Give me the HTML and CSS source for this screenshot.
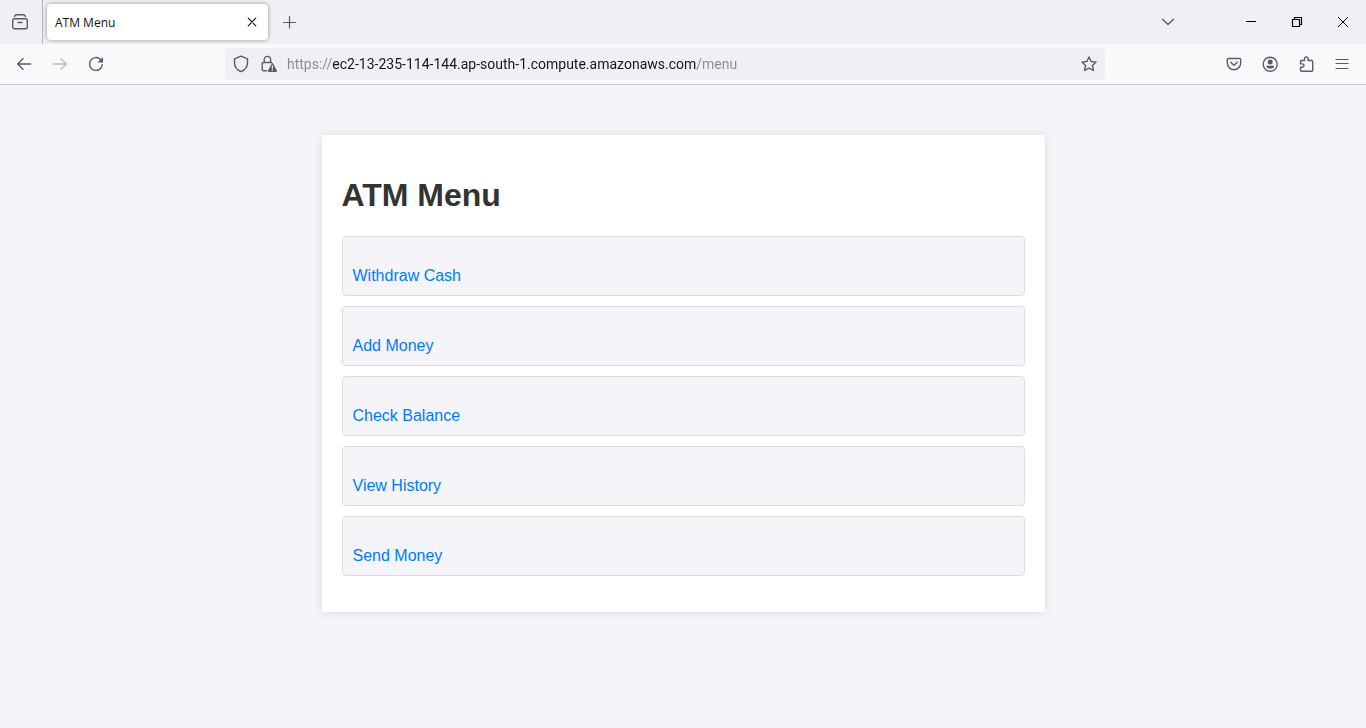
FILE: index.html
```html
<!DOCTYPE html>
<html lang="en">
<head>
<meta charset="utf-8">
<meta name="viewport" content="width=device-width, initial-scale=1">
<title>ATM Menu</title>
<link rel="stylesheet" href="styles.css">
</head>
<body>
<header class="browser">
  <div class="tabbar">
    <button class="tool tabview" aria-label="View recent browsing">
      <svg width="16" height="16" viewBox="0 0 16 16"><rect x=".7" y="4.7" width="14.6" height="10" rx="1.8"/><path d="M2.5 2.6Q3 .7 4.8 .7h6.4q1.800 0 2.300 1.900M6 8.500h4"/></svg>
    </button>
    <div class="tab">
      <span class="tab-title">ATM Menu</span>
      <button class="tab-close" aria-label="Close tab">
        <svg width="10" height="10" viewBox="0 0 10 10"><path d="M1.200 1.200l7.600 7.600M8.800 1.200l-7.600 7.600"/></svg>
      </button>
    </div>
    <button class="tool new-tab" aria-label="New tab">
      <svg width="12" height="12" viewBox="0 0 12 12"><path d="M6.500 .5v11.500M.5 6.500h12"/></svg>
    </button>
    <button class="tool all-tabs" aria-label="List all tabs">
      <svg width="14" height="8" viewBox="0 0 14 8"><path d="M1.500 1.200L7 6.500l5.500-5.300"/></svg>
    </button>
    <div class="window-controls">
      <button aria-label="Minimize"><svg width="12" height="12" viewBox="0 0 12 12"><path d="M1 5.500h10"/></svg></button>
      <button aria-label="Restore"><svg width="12" height="12" viewBox="0 0 12 12"><path d="M1.500 3.500h7v7h-7zM3.500 3.500v-2h7v7H8.500" stroke-width="1.200"/></svg></button>
      <button aria-label="Close"><svg width="12" height="12" viewBox="0 0 12 12"><path d="M1 1l10 10M11 1L1 11"/></svg></button>
    </div>
  </div>
  <div class="toolbar">
    <div class="tools">
      <button class="tool" aria-label="Back"><svg width="16" height="16" viewBox="0 0 16 16"><path d="M7 2.800L1.700 8 7 13.200M1.700 8h13"/></svg></button>
      <button class="tool" aria-label="Forward" disabled><svg width="16" height="16" viewBox="0 0 16 16"><path d="M9 2.800L14.300 8 9 13.200M14.300 8h-13"/></svg></button>
      <button class="tool" aria-label="Reload"><svg width="16" height="16" viewBox="0 0 16 16"><path d="M14.300 8.500A6.400 6.400 0 1 1 12.500 3.500"/><path class="solid" d="M15 1v5.500H9.500z"/></svg></button>
    </div>
    <div class="urlbar">
      <button class="url-icon" aria-label="Tracking protection"><svg width="16" height="18" viewBox="0 0 16 18"><path d="M8 1.200L14.500 3.800V7.500C14.500 12 11.500 15.300 8 16.700C4.500 15.300 1.500 12 1.500 7.500V3.800z"/></svg></button>
      <button class="url-icon" aria-label="Connection not secure"><svg width="16" height="18" viewBox="0 0 16 18"><path d="M3.200 7.500V4.600a3.200 3.200 0 0 1 6.400 0v2.900M5.500 15.700H2.500q-1.300 0-1.300-1.300V8.800q0-1.300 1.300-1.300h8"/><path class="solid" d="M10.900 8.200q.5-.8 1 0l4 7.500q.4 1.200-.7 1.200H7.600q-1.100 0-.7-1.200z"/><path class="mark" d="M11.400 10.500v3.200M11.400 14.600v1.200"/></svg></button>
      <input class="url" type="text" aria-label="Address" value="https://ec2-13-235-114-144.ap-south-1.compute.amazonaws.com/menu" spellcheck="false">
      <button class="url-icon" aria-label="Bookmark this page"><svg width="16" height="16" viewBox="0 0 16 16"><path d="M8 1l2.100 4.500 5 .6-3.700 3.400 1 5L8 12.100l-4.400 2.400 1-5L.9 6.100l5-.6z"/></svg></button>
    </div>
    <div class="tools">
      <button class="tool" aria-label="Save to Pocket"><svg width="16" height="16" viewBox="0 0 16 16"><path d="M2.500 2.500h11q1.200 0 1.200 1.200V7a6.700 6.700 0 0 1-13.400 0V3.700q0-1.200 1.200-1.200zM4.700 6.200L8 9.300l3.300-3.100"/></svg></button>
      <button class="tool" aria-label="Account"><svg width="16" height="16" viewBox="0 0 16 16"><circle cx="8.200" cy="8.300" r="7"/><circle class="solid" cx="8.200" cy="6" r="2.500"/><path class="solid" d="M4.200 9.800h8q0 2.800-4 2.800t-4-2.800z"/></svg></button>
      <button class="tool" aria-label="Extensions"><svg width="16" height="16" viewBox="0 0 16 16"><path d="M6.500 4.500V2.700a1.800 1.800 0 0 1 3.600 0v1.800h3.600q1 0 1 1v8.800q0 1-1 1H3.500q-1 0-1-1v-3h1.800a1.700 1.700 0 0 0 0-3.400H2.500V5.500q0-1 1-1z"/></svg></button>
      <button class="tool" aria-label="Open application menu"><svg width="14" height="12" viewBox="0 0 14 12"><path d="M1 1.500h12M1 5.500h12M1 10.500h12" stroke-width="1.200"/></svg></button>
    </div>
  </div>
</header>
<main class="container">
  <h1 class="heading">ATM Menu</h1>
  <ul class="menu">
    <li class="menu-item"><a href="#withdraw">Withdraw Cash</a></li>
    <li class="menu-item"><a href="#add">Add Money</a></li>
    <li class="menu-item"><a href="#balance">Check Balance</a></li>
    <li class="menu-item"><a href="#history">View History</a></li>
    <li class="menu-item"><a href="#send">Send Money</a></li>
  </ul>
</main>
</body>
</html>
```
FILE: styles.css
```css
* { box-sizing: border-box; }
body {
  margin: 0;
  background: #f4f4f9;
  font-family: "Liberation Sans", Arial, sans-serif;
  font-size: 16px;
  color: #333;
}
button {
  display: flex;
  align-items: center;
  justify-content: center;
  padding: 0;
  border: 0;
  background: none;
  color: inherit;
}
svg {
  overflow: visible;
  fill: none;
  stroke: currentColor;
  stroke-width: 1.4;
  stroke-linejoin: round;
  stroke-linecap: round;
}
.solid { fill: currentColor; stroke: none; }
.mark { stroke: #f0f0f4; stroke-width: 1.2; stroke-linecap: butt; }

.browser {
  border-bottom: 1px solid #cccccf;
  color: #5b5b66;
  font-family: "Open Sans", "Noto Sans", sans-serif;
}
.tabbar {
  display: flex;
  align-items: center;
  height: 44px;
  padding-left: 2px;
  background: #f0eff4;
}
.tool { width: 36px; height: 32px; }
.tool:disabled { color: #bdbdc2; }
.tabview {
  width: 41px;
  height: 44px;
  padding-right: 4px;
  border-right: 1px solid #b5b5bb;
}
.tab {
  display: flex;
  align-items: center;
  justify-content: space-between;
  flex: 0 1 221px;
  height: 36px;
  margin-left: 4px;
  padding: 0 4px 0 8px;
  border-radius: 4px;
  background: #fff;
  box-shadow: 0 0 4px rgba(0, 0, 0, .4);
  color: #15141a;
  font-size: 12px;
}
.tab-close { width: 24px; height: 24px; }
.tab-close svg { stroke-width: 1.1; }
.new-tab { margin-left: 3px; }
.new-tab svg { stroke-width: 1.2; }
.all-tabs { margin-left: auto; }
.window-controls {
  display: flex;
  margin-left: 42px;
  color: #000;
}
.window-controls button { width: 46px; height: 44px; }
.window-controls svg { stroke-width: 1; stroke-linejoin: miter; stroke-linecap: butt; }

.toolbar {
  display: flex;
  align-items: center;
  height: 40px;
  padding: 0 6px;
  background: #f9f9fb;
}
.tools { display: flex; }
.urlbar {
  display: flex;
  align-items: center;
  flex: 0 1 880px;
  height: 32px;
  margin: 0 auto;
  padding: 0 2px;
  border-radius: 4px;
  background: #f0f0f4;
}
.url-icon { flex: none; width: 28px; height: 28px; }
.url {
  flex: 1;
  min-width: 0;
  height: 28px;
  margin-left: 4px;
  padding: 0;
  border: 0;
  outline: 0;
  background: linear-gradient(to right, #8a8a93 45px, #15141a 45px 410px, #8a8a93 410px);
  background-clip: text;
  -webkit-background-clip: text;
  color: transparent;
  caret-color: #15141a;
  font-family: Roboto, "Open Sans", sans-serif;
  font-size: 14px;
}

.container {
  width: calc(50% + 40px);
  margin: 50px auto;
  padding: 20px;
  background: #fff;
  box-shadow: 0 0 10px rgba(0, 0, 0, .1);
}
.heading {
  margin: 21px 0 22px;
  font-size: 32px;
  line-height: 38px;
}
.menu {
  display: grid;
  gap: 10px;
  margin: 0 0 16px;
  padding: 0;
  list-style: none;
}
.menu-item {
  padding: 29px 10px 10px;
  border: 1px solid #ddd;
  border-radius: 4px;
  background: #f4f4f9;
  line-height: 19px;
}
.menu-item a { color: #007bff; text-decoration: none; }
```
